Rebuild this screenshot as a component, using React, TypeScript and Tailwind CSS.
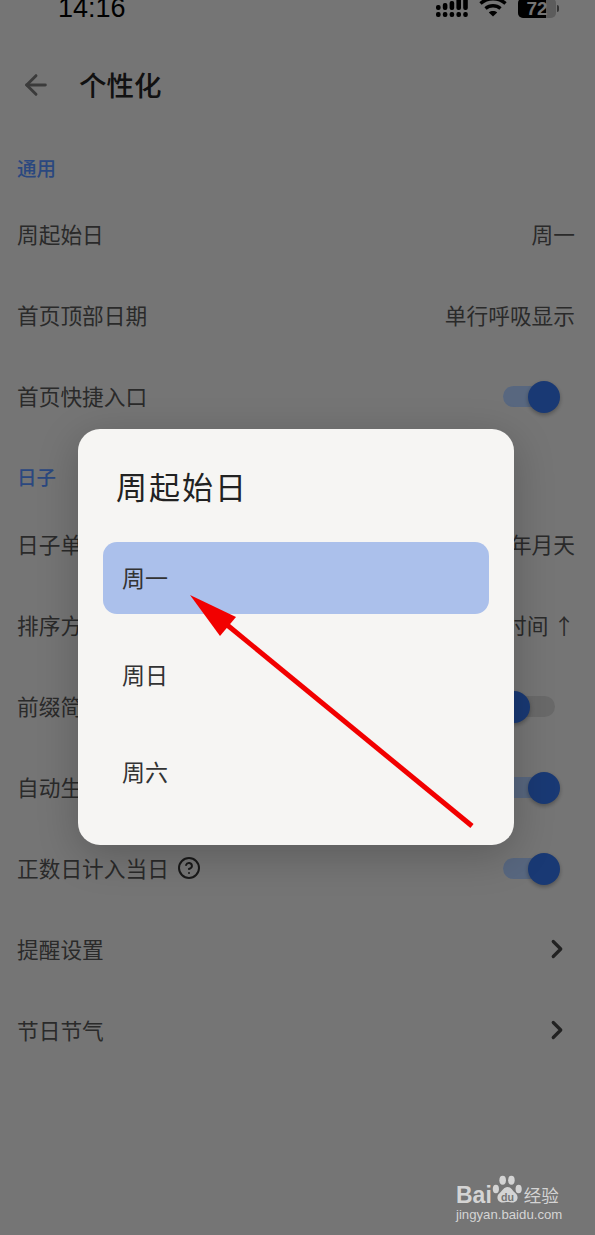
import { ArrowLeft, ChevronRight, CircleHelp } from "lucide-react";

const FONT = "font-['Noto_Sans_CJK_SC','Noto_Sans',sans-serif]";

function Toggle({ on = true }: { on?: boolean }) {
  return (
    <div className={`relative mr-[20px] h-[21px] w-[52px] rounded-full ${on ? "bg-[#b0cfff]" : "bg-[#d2d2d2]"}`}>
      <div
        className={`absolute top-[-5px] h-[32px] w-[32px] rounded-full bg-[#3272e8] shadow-[0_2px_4px_rgba(0,0,0,0.3)] ${on ? "right-[-5px]" : "left-[-5px]"}`}
      />
    </div>
  );
}

function Row({ label, children }: { label: React.ReactNode; children?: React.ReactNode }) {
  return (
    <div className="flex h-[81px] items-center justify-between pl-[17px] pr-[20px] text-[21.7px] text-[#555]">
      <div className="flex items-center">{label}</div>
      {children}
    </div>
  );
}

function Section({ title, className }: { title: string; className: string }) {
  return <div className={`flex h-[30px] items-center pl-[17px] text-[19.5px] font-medium text-[#5590ff] ${className}`}>{title}</div>;
}

function Chevron() {
  return <ChevronRight className="mr-[3px] h-[30px] w-[30px] text-[#444]" strokeWidth={2.6} />;
}

function StatusIcons() {
  return (
    <div className="mr-[36px] flex items-center">
      <svg width="32" height="18" viewBox="0 0 32 18" fill="#000" className="mr-[11px]">
        <rect x="0" y="6" width="4.6" height="5" rx="2" />
        <rect x="0" y="13" width="4.6" height="5" rx="2" />
        <rect x="6.8" y="4" width="4.6" height="7" rx="2" />
        <rect x="6.8" y="13" width="4.6" height="5" rx="2" />
        <rect x="13.6" y="2" width="4.6" height="9" rx="2" />
        <rect x="13.6" y="13" width="4.6" height="5" rx="2" />
        <rect x="20.4" y="-2" width="4.6" height="13" rx="2" />
        <rect x="20.4" y="13" width="4.6" height="5" rx="2" />
        <rect x="27.2" y="-2" width="4.6" height="13" rx="2" />
        <rect x="27.2" y="13" width="4.6" height="5" rx="2" />
      </svg>
      <svg width="28" height="20" viewBox="0 0 28 20" fill="none" stroke="#000" strokeWidth="3.4" className="mr-[11px]">
        <path d="M1.5 5.5C8.5-0.8 19.5-0.8 26.5 5.5" />
        <path d="M6.5 10.5C10.8 6.8 17.2 6.8 21.5 10.5" />
        <path d="M14 18.5L9.8 14.4C12.2 12.5 15.8 12.5 18.2 14.4Z" fill="#000" stroke="none" />
      </svg>
      <div className="relative flex h-[20px] w-[38px] items-center justify-center overflow-hidden rounded-[5px] bg-[#b8b8b8]">
        <div className="absolute inset-y-0 left-0 w-[28px] bg-black" />
        <span className="relative font-['Liberation_Sans',sans-serif] text-[19px] font-bold leading-none text-[#e8e8e8]">72</span>
      </div>
      <div className="ml-[1px] h-[7px] w-[2px] rounded-r bg-[#666]" />
    </div>
  );
}

function BaiduMark() {
  return (
    <div className="absolute left-[456px] top-[1171px] w-[108px] text-[#d4d4d4]">
      <div className="flex h-[36px] items-end">
        <span className="font-['Liberation_Sans',sans-serif] text-[23px] font-bold leading-[23px]">Bai</span>
        <svg width="31" height="36" viewBox="0 0 32 36" className="mb-[-1px]" fill="#d4d4d4">
          <ellipse cx="4" cy="17" rx="3.2" ry="4.4" />
          <ellipse cx="11" cy="8" rx="3.4" ry="4.6" />
          <ellipse cx="20" cy="8" rx="3.4" ry="4.6" />
          <ellipse cx="27.5" cy="17" rx="3.2" ry="4.4" />
          <path d="M16 15c4 0 5 4 8 6 4 3 3 10-3 10-2 0-3-.6-5-.6s-3 .6-5 .6c-6 0-7-7-3-10 3-2 4-6 8-6z" />
          <text x="16" y="29" textAnchor="middle" fontSize="11" fontWeight="700" fill="#757575" fontFamily="Liberation Sans, sans-serif">du</text>
        </svg>
        <span className="ml-[1px] text-[17.5px] leading-[24px]">经验</span>
      </div>
      <div className="mt-[1px] font-['Liberation_Sans',sans-serif] text-[13.2px] leading-[14px]">jingyan.baidu.com</div>
    </div>
  );
}

export default function App() {
  return (
    <div className={`relative h-[1235px] w-[595px] overflow-hidden bg-[#ebebeb] ${FONT}`}>
      {/* status bar, clipped at the top of the shot */}
      <div className="mt-[-7px] flex h-[30px] items-center justify-between pl-[58px]">
        <span className="font-['Liberation_Sans',sans-serif] text-[27px] text-black">14:16</span>
        <StatusIcons />
      </div>

      <div className="mt-[34px] flex h-[56px] items-center pl-[20px]">
        <ArrowLeft className="h-[32px] w-[32px] text-[#777]" strokeWidth={2.2} />
        <span className="ml-[27px] text-[27.5px] font-medium text-[#222]">个性化</span>
      </div>

      <Section title="通用" className="mt-[40px]" />
      <div className="mt-[11px]">
        <Row label="周起始日"><span>周一</span></Row>
        <Row label="首页顶部日期"><span>单行呼吸显示</span></Row>
        <Row label="首页快捷入口"><Toggle /></Row>
      </div>

      <Section title="日子" className="mt-[25px]" />
      <div className="mt-[11.5px]">
        <Row label="日子单位"><span>年月天</span></Row>
        <Row label="排序方式"><span>时间 ↑</span></Row>
        <Row label="前缀简化"><Toggle on={false} /></Row>
        <Row label="自动生成"><Toggle /></Row>
        <Row
          label={
            <>
              正数日计入当日
              <CircleHelp className="ml-[8px] h-[24px] w-[24px] text-[#333]" strokeWidth={2} />
            </>
          }
        >
          <Toggle />
        </Row>
        <Row label="提醒设置"><Chevron /></Row>
        <Row label="节日节气"><Chevron /></Row>
      </div>

      {/* dim layer and dialog */}
      <div className="absolute inset-0 bg-black/50" />
      <div className="absolute left-[78px] top-[429px] h-[416px] w-[436px] rounded-[22px] bg-[#f6f5f3] px-[25px] shadow-[0_10px_40px_rgba(0,0,0,0.22)]">
        <div className="flex h-[113px] items-center pl-[13px] pt-[2px] text-[31px] tracking-[2px] text-[#222]">周起始日</div>
        <div className="flex flex-col gap-[25px] text-[23px] text-[#333]">
          <div className="flex h-[72px] items-center rounded-[14px] bg-[#abc0eb] pb-[2px] pl-[19px]">周一</div>
          <div className="flex h-[72px] items-center pb-[2px] pl-[19px]">周日</div>
          <div className="flex h-[72px] items-center pb-[2px] pl-[19px]">周六</div>
        </div>
      </div>

      {/* annotation arrow */}
      <svg className="absolute inset-0" width="595" height="1235" viewBox="0 0 595 1235">
        <line x1="472" y1="826" x2="226" y2="624" stroke="#f20000" strokeWidth="5" />
        <polygon points="190,595 236,617 220,636" fill="#f20000" />
      </svg>

      <BaiduMark />
    </div>
  );
}
